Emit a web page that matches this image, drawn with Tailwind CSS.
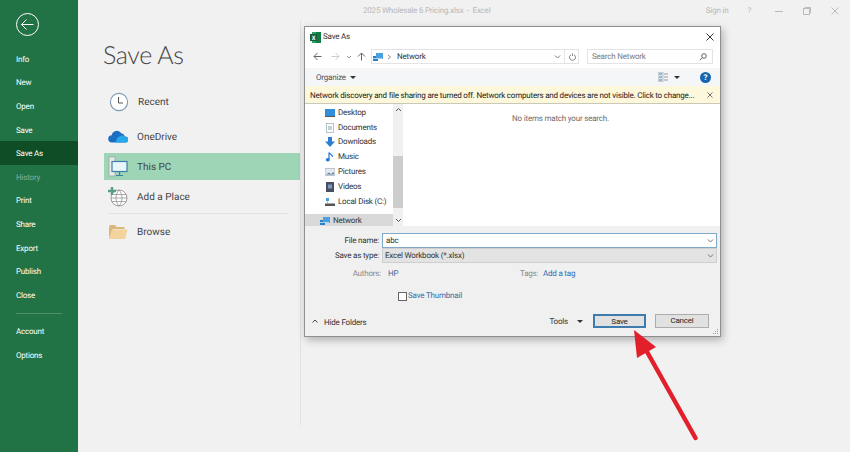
<!DOCTYPE html>
<html lang="en"><head><meta charset="utf-8"><title>Save As</title>
<script src="https://cdn.jsdelivr.net/npm/@tailwindcss/browser@4"></script></head>
<body class="m-0 overflow-hidden">
<div class="relative w-[850px] h-[452px] overflow-hidden flex bg-[#f1f1f1] font-['Roboto',sans-serif] text-[#444] [text-rendering:geometricPrecision]">
  <!-- Backstage sidebar -->
  <aside class="w-[78px] h-full bg-[#217346] text-white text-[8px] tracking-[-0.2px] flex flex-col shrink-0">
    <div class="h-[47px] pl-[16px] pt-[13px]">
      <svg width="23" height="23" viewBox="0 0 23 23" fill="none" stroke="#fff" stroke-width="1"><circle cx="11.5" cy="11.5" r="11"/><path d="M5.5 11.5h12M10.5 6.5l-5 5 5 5"/></svg>
    </div>
    <div class="h-[23.6px] pl-[16px] pt-[2px] flex items-center">Info</div>
    <div class="h-[23.6px] pl-[16px] pt-[2px] flex items-center">New</div>
    <div class="h-[23.6px] pl-[16px] pt-[2px] flex items-center">Open</div>
    <div class="h-[23.6px] pl-[16px] pt-[2px] flex items-center">Save</div>
    <div class="h-[23.6px] pl-[16px] pt-[2px] flex items-center bg-[#0e4d26]">Save As</div>
    <div class="h-[23.6px] pl-[16px] pt-[2px] flex items-center text-[#7fb096]">History</div>
    <div class="h-[23.6px] pl-[16px] pt-[2px] flex items-center">Print</div>
    <div class="h-[23.6px] pl-[16px] pt-[2px] flex items-center">Share</div>
    <div class="h-[23.6px] pl-[16px] pt-[2px] flex items-center">Export</div>
    <div class="h-[23.6px] pl-[16px] pt-[2px] flex items-center">Publish</div>
    <div class="h-[23.6px] pl-[16px] pt-[2px] flex items-center">Close</div>
    <div class="mx-[16px] my-[6px] h-px bg-[#4a9068]"></div>
    <div class="h-[23.6px] pl-[16px] pt-[2px] flex items-center">Account</div>
    <div class="h-[23.6px] pl-[16px] pt-[2px] flex items-center">Options</div>
  </aside>

  <!-- Backstage main -->
  <main class="flex-1 flex flex-col relative">
    <div class="h-[21px] flex items-center text-[8px] tracking-[-0.2px] text-[#b8b8b8]">
      <span class="ml-[285px]">2025 Wholesale 6 Pricing.xlsx&nbsp; -&nbsp; Excel</span>
      <span class="ml-auto mr-[19px]">Sign in</span>
      <span class="mr-[24px]">?</span>
      <svg class="mr-[20px]" width="8" height="8" viewBox="0 0 8 8" stroke="#bbb" fill="none"><path d="M0 4.5h8"/></svg>
      <svg class="mr-[20px]" width="8" height="8" viewBox="0 0 8 8" stroke="#bbb" fill="none"><rect x="0.5" y="1.5" width="6" height="6"/><path d="M2 1V.5h5.5V6H7"/></svg>
      <svg class="mr-[11px]" width="8" height="8" viewBox="0 0 8 8" stroke="#bbb" fill="none"><path d="M.5.5l7 7M7.5.5l-7 7"/></svg>
    </div>
    <div class="flex h-[404px]">
      <div class="w-[223px] border-r border-[#e0e0e0] pl-[26px] shrink-0">
        <h1 class="text-[25px] leading-[32px] tracking-[-0.4px] font-light text-[#444] mt-[18px] -ml-[1px] h-[32px] font-['Lato',sans-serif]">Save As</h1>
        <div class="text-[10px] text-[#444] mt-[13px]">
          <div class="h-[35px] flex items-center pl-[5px]">
            <svg class="w-[20px] h-[20px] shrink-0" viewBox="0 0 20 20" fill="none"><circle cx="10" cy="10" r="8.6" fill="#fff" stroke="#7d98b5" stroke-width="1.1"/><path d="M9.5 5v6h4.5" stroke="#555" stroke-width="1"/></svg>
            <span class="ml-[9px] pt-[2px]">Recent</span>
          </div>
          <div class="h-[34px] flex items-center pl-[4px]">
            <svg class="w-[20px] h-[20px] shrink-0" viewBox="0 0 20 20"><path d="M4 16.5a3.6 3.6 0 0 1-.3-7.2 5.2 5.2 0 0 1 9.6-2 4.3 4.3 0 0 1 3.6 3.2 3 3 0 0 1 .6 6z" fill="#1b6fc2"/><path d="M8 16.5h9.5a2.6 2.6 0 0 0 .3-5.2c-1.2-2.2-5-2.6-6.5-.5-2 0-3.3 3.7-3.3 5.700z" fill="#28a8ea"/></svg>
            <span class="ml-[9px] pt-[2px]">OneDrive</span>
          </div>
          <div class="h-[27px] w-[196px] flex items-center pl-[4px] bg-[#9fd5b7]">
            <svg class="w-[20px] h-[22px] shrink-0" viewBox="0 0 20 22" fill="none"><rect x="1" y="1" width="6" height="19" fill="#e8ece9" stroke="#9aa5a0" stroke-width=".8"/><rect x="4" y="5.5" width="15" height="10" fill="#e8f5fb" stroke="#3d7ea6" stroke-width="1.2"/><path d="M11.5 16v3M8 19.5h7" stroke="#3d7ea6" stroke-width="1.2"/></svg>
            <span class="ml-[9px] pt-[2px]">This PC</span>
          </div>
          <div class="h-[33px] flex items-center pl-[4px]">
            <svg class="w-[20px] h-[20px] shrink-0" viewBox="0 0 20 20" fill="none"><circle cx="11" cy="11" r="8" fill="#fff" stroke="#888" stroke-width=".8"/><path d="M3 11h16M3.8 7.5h14.4M3.8 14.5h14.4M11 3c-4 4.5-4 11.5 0 16M11 3c4 4.5 4 11.5 0 16" stroke="#888" stroke-width=".7"/><path d="M4 0v8M0 4h8" stroke="#5b9e87" stroke-width="2.4"/></svg>
            <span class="ml-[9px] pt-[2px]">Add a Place</span>
          </div>
          <div class="ml-[4px] mr-[12px] h-px bg-[#e2e2e2]"></div>
          <div class="h-[35px] flex items-center pl-[4px]">
            <svg class="w-[20px] h-[16px] shrink-0" viewBox="0 0 20 16"><path d="M1 15V2.5L2 1h5l1.5 2h8v2H5z" fill="#dcb77b"/><path d="M1 15L4 5.5h15.5L17 15z" fill="#f2d49c"/></svg>
            <span class="ml-[9px] pt-[2px]">Browse</span>
          </div>
        </div>
      </div>
    </div>
  </main>

  <!-- Save As dialog -->
  <section class="absolute left-[304px] top-[26px] w-[417px] h-[311px] bg-white border border-[#8f8f8f] shadow-[2px_3px_8px_rgba(0,0,0,0.28)] flex flex-col text-[8px] tracking-[-0.2px] text-[#333]">
    <div class="h-[20px] flex items-center pl-[5px] shrink-0">
      <svg width="11" height="11" viewBox="0 0 11 11"><rect x="2" width="9" height="11" fill="#21a366"/><rect x="6" y="0" width="5" height="11" fill="#107c41"/><rect y="2" width="7" height="7" fill="#185c37"/><text x="3.5" y="7.5" font-size="6" font-weight="700" text-anchor="middle" fill="#fff" font-family="Roboto">X</text></svg>
      <span class="ml-[2px]">Save As</span>
      <svg class="ml-auto mr-[6px]" width="8" height="8" viewBox="0 0 8 8" stroke="#333" fill="none"><path d="M.5.5l7 7M7.5.5l-7 7"/></svg>
    </div>
    <div class="h-[21px] pb-[2px] flex items-center shrink-0 pl-[8px]">
      <svg width="9" height="9" viewBox="0 0 9 9" fill="none" stroke="#666" stroke-width="1"><path d="M8.5 4.5H1M4.5 1L1 4.5 4.5 8"/></svg>
      <svg class="ml-[9px]" width="9" height="9" viewBox="0 0 9 9" fill="none" stroke="#ccc" stroke-width="1"><path d="M.5 4.5H8M4.5 1L8 4.5 4.5 8"/></svg>
      <svg class="ml-[6px]" width="6" height="6" viewBox="0 0 6 6" fill="none" stroke="#888" stroke-width=".9"><path d="M1 2l2 2 2-2"/></svg>
      <svg class="ml-[5px]" width="9" height="9" viewBox="0 0 9 9" fill="none" stroke="#666" stroke-width="1"><path d="M4.5 8.5V1M1 4.5L4.5 1 8 4.5"/></svg>
      <div class="ml-[5px] w-[208px] h-[15px] border border-[#e3e3e3] flex items-center pl-[1px]">
        <svg width="11" height="10" viewBox="0 0 11 10"><rect x="0" y="4" width="5" height="5" fill="#2c7fc4"/><rect x="3" y="1" width="7" height="6" fill="#4aa0e0"/><path d="M0 6.5h9" stroke="#a8d4f0"/></svg>
        <svg class="ml-[3px]" width="5" height="6" viewBox="0 0 5 6" fill="none" stroke="#777" stroke-width=".8"><path d="M1 1l2.5 2L1 5"/></svg>
        <span class="ml-[5px] pt-[1px]">Network</span>
        <svg class="ml-auto mr-[3px]" width="7" height="6" viewBox="0 0 7 6" fill="none" stroke="#666" stroke-width=".9"><path d="M1 1.5L3.5 4 6 1.5"/></svg>
        <div class="w-px h-[13px] bg-[#e3e3e3] mr-[4px]"></div>
        <svg class="mr-[2px]" width="7" height="8" viewBox="0 0 7 8" fill="none" stroke="#666" stroke-width=".8"><path d="M2 1.7a3 3 0 1 0 3 0M3.5.5V3"/></svg>
      </div>
      <div class="ml-[8px] w-[126px] h-[15px] border border-[#e3e3e3] flex items-center pl-[4px] text-[#7a7a7a] justify-between pr-[5px]">
        <span class="pt-[1px]">Search Network</span>
        <svg width="8" height="8" viewBox="0 0 8 8" fill="none" stroke="#555" stroke-width=".9"><circle cx="5" cy="3" r="2.3"/><path d="M3.3 4.7L.8 7.2"/></svg>
      </div>
    </div>
    <div class="h-[18px] bg-[#f5f6f7] flex items-center pl-[11px] shrink-0 text-[#4a5560]">
      <span class="pt-[2px]">Organize</span>
      <span class="ml-[4px] w-0 h-0 border-x-[3px] border-x-transparent border-t-[3px] border-t-[#333]"></span>
      <svg class="ml-auto" width="10" height="10" viewBox="0 0 10 10"><rect x="0" y="0" width="5" height="10" fill="#dfe5e8" stroke="#8a9aa5" stroke-width=".5"/><path d="M1 2h3M1 5h3M1 8h3" stroke="#4a90c0"/><path d="M6 2h4M6 5h4M6 8h4" stroke="#99a"/></svg>
      <span class="ml-[6px] w-0 h-0 border-x-[3px] border-x-transparent border-t-[3px] border-t-[#333]"></span>
      <span class="ml-[20px] mr-[9px] w-[11px] h-[11px] rounded-full bg-[#1565b0] text-white text-[8px] font-bold leading-[11px] text-center">?</span>
    </div>
    <div class="h-[18px] bg-[#fdf8dc] border-b border-[#c9c9b8] flex items-center pl-[5px] shrink-0 text-[#222]">
      <span class="pt-[3px] whitespace-nowrap">Network discovery and file sharing are turned off. Network computers and devices are not visible. Click to change...</span>
      <svg class="ml-auto mr-[7px]" width="6" height="6" viewBox="0 0 6 6" stroke="#777" fill="none"><path d="M.5.5l5 5M5.500.5l-5 5"/></svg>
    </div>
    <div class="h-[122px] flex shrink-0 overflow-hidden">
      <div class="w-[88px] shrink-0 pt-[1.5px]">
        <div class="h-[14.8px] flex items-center pl-[20px]"><svg class="w-[10px] h-[10px] shrink-0 mr-[3px]" viewBox="0 0 10 10"><rect y="1" width="10" height="8" fill="#2f8fdc"/><rect y="8" width="10" height="1" fill="#555"/></svg>Desktop</div>
        <div class="h-[14.8px] flex items-center pl-[20px]"><svg class="w-[10px] h-[10px] shrink-0 mr-[3px]" viewBox="0 0 10 10"><rect x="1.5" y=".5" width="7" height="9" fill="#fff" stroke="#9aa" stroke-width=".7"/><path d="M3 4h4M3 6h4" stroke="#7ab"/></svg>Documents</div>
        <div class="h-[14.8px] flex items-center pl-[20px]"><svg class="w-[10px] h-[10px] shrink-0 mr-[3px]" viewBox="0 0 10 10"><path d="M3 0h4v4.5h3L5 10 0 4.5h3z" fill="#2e7fd0"/></svg>Downloads</div>
        <div class="h-[14.8px] flex items-center pl-[20px]"><svg class="w-[10px] h-[10px] shrink-0 mr-[3px]" viewBox="0 0 10 10"><path d="M4 .5V7M4 .5c1 2 3.5 2 3.5 4.5" stroke="#1e78d0" fill="none" stroke-width="1.2"/><ellipse cx="2.8" cy="7.8" rx="2" ry="1.7" fill="#1e78d0"/></svg>Music</div>
        <div class="h-[14.8px] flex items-center pl-[20px]"><svg class="w-[10px] h-[10px] shrink-0 mr-[3px]" viewBox="0 0 10 10"><rect y="1.5" width="10" height="7" fill="#e3e9ee" stroke="#8a98a5" stroke-width=".5"/><path d="M1 7.5l3-2 2 1.5 3-2v2.5z" fill="#5a86aa"/></svg>Pictures</div>
        <div class="h-[14.8px] flex items-center pl-[20px]"><svg class="w-[10px] h-[10px] shrink-0 mr-[3px]" viewBox="0 0 10 10"><rect x="1" width="8" height="10" fill="#4a4f60"/><rect x="3" y="2.5" width="4" height="4" fill="#7d9ac0"/></svg>Videos</div>
        <div class="h-[14.8px] flex items-center pl-[20px]"><svg class="w-[10px] h-[10px] shrink-0 mr-[3px]" viewBox="0 0 10 10"><rect y="6.5" width="10" height="2.5" fill="#555"/><rect x="1" y="1" width="3" height="3" fill="#4aa0d8"/><path d="M2.5 4v2.5h5" stroke="#8ab" fill="none" stroke-width=".7"/></svg>Local Disk (C:)</div>
        <div class="h-[4.9px]"></div>
        <div class="h-[14px] flex items-center pl-[15px] pt-[1px] bg-[#d9d9d9]"><svg class="w-[11px] h-[10px] shrink-0 mr-[2px]" viewBox="0 0 11 10"><rect x="0" y="4" width="5" height="5" fill="#2c7fc4"/><rect x="3" y="1" width="7" height="6" fill="#4aa0e0"/><path d="M0 6.5h9" stroke="#a8d4f0"/></svg>Network</div>
      </div>
      <div class="w-[10px] shrink-0 bg-[#f0f0f0] flex flex-col items-center">
        <svg class="mt-[3px]" width="7" height="5" viewBox="0 0 7 5" fill="none" stroke="#555" stroke-width="1"><path d="M1 4l2.5-2.5L6 4"/></svg>
        <div class="mt-[44px] w-full h-[52px] bg-[#cdcdcd]"></div>
        <svg class="mt-[10px]" width="7" height="5" viewBox="0 0 7 5" fill="none" stroke="#555" stroke-width="1"><path d="M1 1l2.5 2.5L6 1"/></svg>
      </div>
      <div class="flex-1 text-center text-[#6d6d6d] pt-[9px] pr-[2px]">No items match your search.</div>
    </div>
    <div class="flex-1 bg-[#f0f0f0] relative flex flex-col">
      <div class="h-[7px]"></div>
      <div class="flex h-[15px] items-center">
        <span class="w-[74px] text-right shrink-0 pt-[1px]">File name:</span>
        <div class="ml-[3px] w-[335px] h-[15px] bg-white border border-[#7ea9c9] flex items-center pl-[3px]"><span>abc</span><svg class="ml-auto mr-[2px]" width="7" height="6" viewBox="0 0 7 6" fill="none" stroke="#666" stroke-width=".9"><path d="M1 1.5L3.5 4 6 1.5"/></svg></div>
      </div>
      <div class="flex h-[15px] items-center">
        <span class="w-[74px] text-right shrink-0 pt-[1px]">Save as type:</span>
        <div class="ml-[3px] w-[335px] h-[15px] bg-[#e3e3e3] border border-[#cfcfcf] flex items-center pl-[2px]"><span class="pt-[1px]">Excel Workbook (*.xlsx)</span><svg class="ml-auto mr-[2px]" width="7" height="6" viewBox="0 0 7 6" fill="none" stroke="#666" stroke-width=".9"><path d="M1 1.5L3.5 4 6 1.5"/></svg></div>
      </div>
      <div class="flex h-[12px] items-center mt-[5px]">
        <span class="w-[76px] text-right shrink-0 text-[#8a8a8a]">Authors:</span>
        <span class="ml-[7px] w-[132px] text-[#3a6ea5]">HP</span>
        <span class="w-[23px] text-[#8a8a8a]">Tags:</span>
        <span class="text-[#2f6db5]">Add a tag</span>
      </div>
      <div class="flex h-[10px] items-center mt-[11px] pl-[93px]">
        <span class="w-[9px] h-[9px] border border-[#666] bg-white shrink-0"></span>
        <span class="ml-[1px] text-[#3a6ea5]">Save Thumbnail</span>
      </div>
      <div class="flex items-center h-[14px] mt-[13px]">
        <svg class="ml-[7px]" width="6" height="5" viewBox="0 0 6 5" fill="none" stroke="#444" stroke-width="1"><path d="M.5 3.5L3 1l2.5 2.5"/></svg>
        <span class="ml-[6px] pt-[3px]">Hide Folders</span>
        <span class="ml-auto pt-[2px]">Tools</span>
        <span class="ml-[9px] w-0 h-0 border-x-[3px] border-x-transparent border-t-[3px] border-t-[#333]"></span>
        <button class="ml-[10px] w-[53px] h-[14px] border-2 border-[#3d7cad] bg-[#e1e1e1] text-[8px] text-[#222]">Save</button>
        <button class="ml-[9px] mr-[11px] w-[54px] h-[14px] border border-[#adadad] bg-[#e1e1e1] text-[8px] text-[#222]">Cancel</button>
      </div>
      <svg class="absolute right-[1px] bottom-[1px]" width="6" height="6" viewBox="0 0 6 6" fill="#a0a0a0"><rect x="4" y="0" width="1" height="1"/><rect x="2" y="2" width="1" height="1"/><rect x="4" y="2" width="1" height="1"/><rect x="0" y="4" width="1" height="1"/><rect x="2" y="4" width="1" height="1"/><rect x="4" y="4" width="1" height="1"/></svg>
    </div>
  </section>

  <!-- Annotation arrow -->
  <svg class="absolute left-[625px] top-[325px]" width="80" height="120" viewBox="625 325 80 120"><path d="M646 350L695.5 438" stroke="#e2202c" stroke-width="4.5" stroke-linecap="round" fill="none"/><path d="M634 330L656 347L637 358z" fill="#e2202c"/></svg>
</div>
</body></html>
